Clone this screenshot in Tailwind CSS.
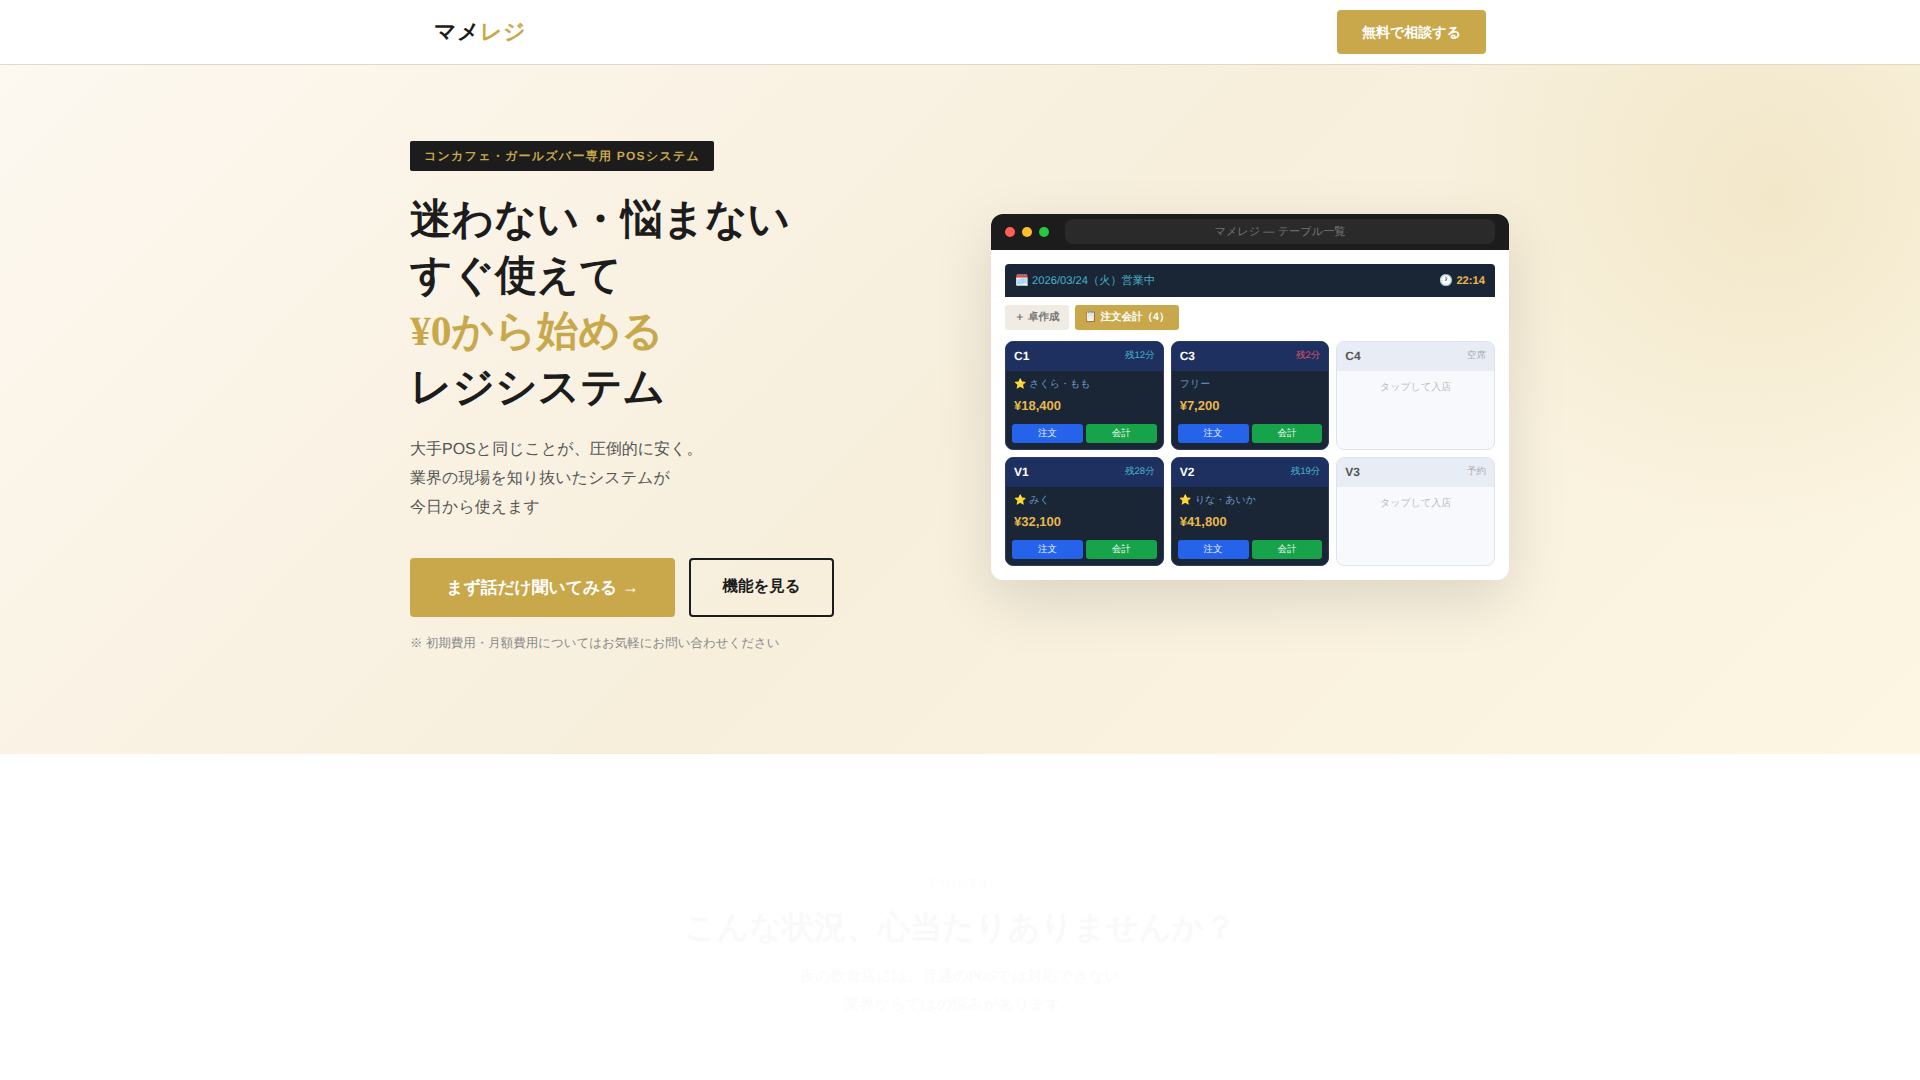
<!DOCTYPE html>
<html lang="ja"><head><meta charset="utf-8">
<script src="https://cdn.jsdelivr.net/npm/@tailwindcss/browser@4"></script>
</head>
<body class="bg-white font-['Liberation_Sans',sans-serif] [text-rendering:geometricPrecision] text-[#1c1c1c] h-[1080px] overflow-hidden">
<nav class="h-[65px] bg-white border-b border-[#e0d8c8]">
  <div class="max-w-[1100px] mx-auto px-6 h-16 flex items-center justify-between">
    <div class="text-[22px] font-bold tracking-[0.02em] pb-[2px]">マメ<span class="text-[#c8a84b]">レジ</span></div>
    <a class="h-11 w-[149px] flex items-center justify-center bg-[#c8a84b] text-white text-sm font-bold rounded-[4px]">無料で相談する</a>
  </div>
</nav>
<section class="relative h-[689px] bg-[linear-gradient(135deg,#fdf8f0_0%,#f7efdc_50%,#fdf6e3_100%)] overflow-hidden">
  <div class="absolute right-[-205px] top-[-219px] w-[700px] h-[700px] rounded-full bg-[radial-gradient(circle,rgba(200,168,75,0.15)_0%,transparent_70%)]"></div>
  <div class="relative max-w-[1100px] h-full mx-auto grid grid-cols-2 gap-[60px] items-center pb-[26px]">
    <div>
      <div class="inline-block bg-[#1c1c1c] text-[#c8a84b] text-xs font-bold tracking-[0.105em] px-[14px] h-[30px] leading-[30px] rounded-[2px] mb-5">コンカフェ・ガールズバー専用 POSシステム</div>
      <h1 class="text-[41.6px] leading-[1.35] font-bold font-['Liberation_Serif',serif] mb-[21px]">迷わない・悩まない<br>すぐ使えて<br><span class="text-[#c8a84b]">¥0から始める</span><br>レジシステム</h1>
      <p class="text-base leading-[1.8] text-[#555] mb-[35px]">大手POSと同じことが、圧倒的に安く。<br>業界の現場を知り抜いたシステムが<br>今日から使えます</p>
      <div class="flex gap-[14px] mb-[17px]">
        <a class="w-[265px] h-[59px] flex items-center justify-center bg-[#c8a84b] text-white text-[16.8px] font-bold rounded-[4px]">まず話だけ聞いてみる →</a>
        <a class="w-[145px] h-[59px] flex items-center justify-center border-2 border-[#1c1c1c] text-[15.5px] font-bold rounded-[4px]">機能を見る</a>
      </div>
      <p class="text-[12.48px] text-[#888]">※ 初期費用・月額費用についてはお気軽にお問い合わせください</p>
    </div>
    <div class="mx-[1px] rounded-xl overflow-hidden bg-white shadow-[0_20px_60px_rgba(0,0,0,0.12)]">
      <div class="h-9 bg-[#1c1c1c] flex items-center gap-[7px] px-[14px]">
        <span class="w-[10px] h-[10px] rounded-full bg-[#ff5f57]"></span>
        <span class="w-[10px] h-[10px] rounded-full bg-[#ffbd2e]"></span>
        <span class="w-[10px] h-[10px] rounded-full bg-[#28c840]"></span>
        <div class="flex-1 ml-[9px] h-[25px] rounded-lg bg-[#2a2a2a] text-[#777] text-[11.2px] leading-[27px] text-center">マメレジ — テーブル一覧</div>
      </div>
      <div class="p-[14px]">
        <div class="h-[33px] bg-[#1a2535] rounded-t-[4px] flex items-center justify-between px-[10px] pt-[2px] text-[11.2px] mb-2">
          <span class="text-[#45b4cc]">🗓️ 2026/03/24（火）営業中</span>
          <span class="text-white"><span>🕐</span> <b class="text-[#e8b84b]">22:14</b></span>
        </div>
        <div class="flex gap-[6px] mb-[11px] text-[10.5px] font-bold">
          <span class="h-[25px] w-[64px] pt-[1px] flex items-center justify-center bg-[#f0ebe3] text-[#777] rounded-[3px]">＋ 卓作成</span>
          <span class="h-[25px] w-[104px] pt-[1px] flex items-center justify-center bg-[#c8a84b] text-white rounded-[3px]">📋 注文会計（4）</span>
        </div>
        <div class="grid grid-cols-3 gap-[7px]">
          <div class="h-[109px] rounded-lg overflow-hidden border border-[#2a3a6a] bg-[#1a2535]">
            <div class="h-[29px] bg-[#1e3060] flex items-center justify-between px-2 text-white"><b class="text-xs">C1</b><span class="text-[9.5px] text-[#45b4cc]">残12分</span></div>
            <div class="px-2 pt-[6px] text-[10px] text-[#6b9ac8] h-[19px]">⭐ さくら・もも</div>
            <div class="px-2 mt-[6px] text-[13px] font-bold text-[#e8b84b]">¥18,400</div>
            <div class="flex gap-[3px] px-[6px] mt-[9px]"><span class="flex-1 h-[19px] leading-[19px] text-center text-[9.5px] text-white/90 bg-[#2563eb] rounded-[3px]">注文</span><span class="flex-1 h-[19px] leading-[19px] text-center text-[9.5px] text-white/90 bg-[#16a34a] rounded-[3px]">会計</span></div>
          </div>
          <div class="h-[109px] rounded-lg overflow-hidden border border-[#2a3a6a] bg-[#1a2535]">
            <div class="h-[29px] bg-[#1e3060] flex items-center justify-between px-2 text-white"><b class="text-xs">C3</b><span class="text-[9.5px] text-[#d9536a]">残2分</span></div>
            <div class="px-2 pt-[6px] text-[10px] text-[#6b9ac8] h-[19px]">フリー</div>
            <div class="px-2 mt-[6px] text-[13px] font-bold text-[#e8b84b]">¥7,200</div>
            <div class="flex gap-[3px] px-[6px] mt-[9px]"><span class="flex-1 h-[19px] leading-[19px] text-center text-[9.5px] text-white/90 bg-[#2563eb] rounded-[3px]">注文</span><span class="flex-1 h-[19px] leading-[19px] text-center text-[9.5px] text-white/90 bg-[#16a34a] rounded-[3px]">会計</span></div>
          </div>
          <div class="h-[109px] rounded-lg overflow-hidden border border-[#dde3ee] bg-[#f8f9fc]">
            <div class="h-[29px] bg-[#e8ecf4] flex items-center justify-between px-2"><b class="text-xs text-[#555]">C4</b><span class="text-[9.5px] text-[#aaa]">空席</span></div>
            <div class="pt-[9px] text-[10px] text-center text-[#bbb]">タップして入店</div>
          </div>
          <div class="h-[109px] rounded-lg overflow-hidden border border-[#2a3a6a] bg-[#1a2535]">
            <div class="h-[29px] bg-[#1e3060] flex items-center justify-between px-2 text-white"><b class="text-xs">V1</b><span class="text-[9.5px] text-[#45b4cc]">残28分</span></div>
            <div class="px-2 pt-[6px] text-[10px] text-[#6b9ac8] h-[19px]">⭐ みく</div>
            <div class="px-2 mt-[6px] text-[13px] font-bold text-[#e8b84b]">¥32,100</div>
            <div class="flex gap-[3px] px-[6px] mt-[9px]"><span class="flex-1 h-[19px] leading-[19px] text-center text-[9.5px] text-white/90 bg-[#2563eb] rounded-[3px]">注文</span><span class="flex-1 h-[19px] leading-[19px] text-center text-[9.5px] text-white/90 bg-[#16a34a] rounded-[3px]">会計</span></div>
          </div>
          <div class="h-[109px] rounded-lg overflow-hidden border border-[#2a3a6a] bg-[#1a2535]">
            <div class="h-[29px] bg-[#1e3060] flex items-center justify-between px-2 text-white"><b class="text-xs">V2</b><span class="text-[9.5px] text-[#45b4cc]">残19分</span></div>
            <div class="px-2 pt-[6px] text-[10px] text-[#6b9ac8] h-[19px]">⭐ りな・あいか</div>
            <div class="px-2 mt-[6px] text-[13px] font-bold text-[#e8b84b]">¥41,800</div>
            <div class="flex gap-[3px] px-[6px] mt-[9px]"><span class="flex-1 h-[19px] leading-[19px] text-center text-[9.5px] text-white/90 bg-[#2563eb] rounded-[3px]">注文</span><span class="flex-1 h-[19px] leading-[19px] text-center text-[9.5px] text-white/90 bg-[#16a34a] rounded-[3px]">会計</span></div>
          </div>
          <div class="h-[109px] rounded-lg overflow-hidden border border-[#dde3ee] bg-[#f8f9fc]">
            <div class="h-[29px] bg-[#e8ecf4] flex items-center justify-between px-2"><b class="text-xs text-[#555]">V3</b><span class="text-[9.5px] text-[#aaa]">予約</span></div>
            <div class="pt-[9px] text-[10px] text-center text-[#bbb]">タップして入店</div>
          </div>
        </div>
      </div>
    </div>
  </div>
</section>
<section class="bg-white text-center pt-[121px] opacity-[0.02]">
  <div class="text-xs font-bold tracking-[0.2em] text-[#c8a84b] leading-4 mb-[14px]">POINTS</div>
  <h2 class="text-[32px] font-bold leading-[1.4] mb-[13px]">こんな状況、心当たりありませんか？</h2>
  <p class="text-[15.2px] leading-[28.5px] font-['Liberation_Serif',serif]">夜の飲食店には、普通のPOSでは対応できない<br>業界ならではの悩みがあります。</p>
</section>
</body></html>
